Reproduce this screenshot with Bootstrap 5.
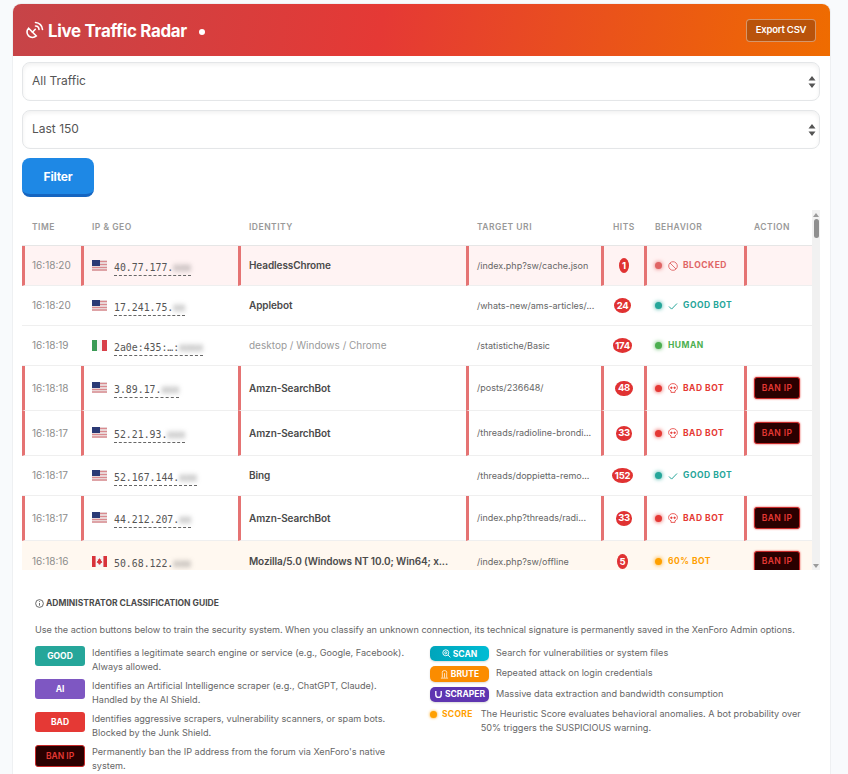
<!DOCTYPE html>
<html lang="en">
<head>
  <meta charset="UTF-8">
  <meta name="viewport" content="width=device-width, initial-scale=1.0">
  <title>Live Traffic Radar</title>
  <link href="https://cdn.jsdelivr.net/npm/bootstrap@5.3.0/dist/css/bootstrap.min.css" rel="stylesheet">
  <style>
    html, body { height: 774px; overflow: hidden; }
    body { background: #f8fafc; font-family: Inter, "Noto Sans", sans-serif; color: #555; padding: 4px 18px 0 13px; font-size: 10px; }
    .radar-card { background: #fff; border: 0; box-shadow: 0 0 0 1px #eef0f2; border-radius: 8px 8px 0 0; height: 800px; }
    .radar-head { height: 52px; padding: 0 14px 0 13px; border-radius: 8px 8px 0 0; background: linear-gradient(100deg, #c64448 0%, #e53935 45%, #ef6c00 100%); color: #fff; }
    .radar-title { font-size: 16.9px; font-weight: 700; letter-spacing: -.3px; margin: 0; padding-top: 2px; }
    .live-dot { width: 6px; height: 6px; border-radius: 50%; background: #fff; margin-left: 12px; margin-top: 3px; }
    .export-btn { background: #b9530b; border: 1px solid rgba(255,255,255,.4); color: #fff; font-size: 9.5px; font-weight: 600; padding: 0; width: 70px; height: 23px; border-radius: 4px; letter-spacing: -.2px; }
    .filter-zone { padding: 6px 10px 0 9px; }
    .filter-zone .form-select { height: 39px; border-radius: 8px; border-color: #e4e6e8; font-size: 12px; color: #555; padding: 0 20px 2px 9px; margin-bottom: 9px; box-shadow: inset 0 2px 4px rgba(0,0,0,.06); background-size: 8px 12px; background-position: right 3px center; background-image: url("data:image/svg+xml,%3csvg xmlns='http://www.w3.org/2000/svg' viewBox='0 0 8 12'%3e%3cpath fill='%23555' d='M4 0l3.5 4.5h-7zM4 12L.5 7.5h7z'/%3e%3c/svg%3e"); }
    .filter-btn { width: 72px; height: 39px; background: #1e88e5; border: 0; border-bottom: 3px solid #1565c0; border-radius: 8px; color: #fff; font-size: 12px; font-weight: 700; letter-spacing: -.2px; padding: 2px 0 0; }
    .radar-scroll { margin: 13px 10px 0 9px; height: 360px; display: flex; overflow: hidden; }
    .radar-clip { flex: 1; overflow: hidden; }
    .fake-bar { width: 8px; background: #f1f1f1; display: flex; flex-direction: column; align-items: center; }
    .fake-thumb { width: 5px; height: 19px; background: #8f8f8f; border-radius: 3px; margin-top: 2px; }
    .bar-up, .bar-down { width: 0; height: 0; border-left: 3px solid transparent; border-right: 3px solid transparent; }
    .bar-up { border-bottom: 4px solid #9a9a9a; margin-top: 3px; }
    .bar-down { border-top: 4px solid #9a9a9a; margin-top: auto; margin-bottom: 2px; }
    .radar-table { table-layout: fixed; width: 790px; margin: 0; border-collapse: separate; border-spacing: 0; }
    .radar-table th { height: 36px; font-size: 8.5px; font-weight: 600; color: #999; letter-spacing: .5px; text-transform: uppercase; padding: 0 0 0 11px; border-bottom: 1px solid #e6e6e6; vertical-align: middle; }
    .radar-table th:first-child, .radar-table th:last-child { padding-left: 10px; }
    .radar-table th:nth-child(5) { padding-left: 12px; }
    .radar-table td { height: 40px; padding: 0 0 0 11px; vertical-align: middle; font-size: 10px; color: #666; border-bottom: 1px solid #efefef; white-space: nowrap; overflow: hidden; background: transparent; }
    .radar-table td:first-child, .radar-table td:last-child { padding-left: 10px; }
    .row-blocked td { background: #fff3f3; }
    .row-warn td { background: #fff8f0; }
    .radar-table .row-warn td { height: 42px; }
    .radar-table .row-bad td, .radar-table .row-blocked td { border-left: 3px solid #e57373; padding-left: 8px; }
    .radar-table .row-bad td:first-child, .radar-table .row-bad td:last-child, .radar-table .row-blocked td:first-child, .radar-table .row-blocked td:last-child { padding-left: 7px; }
    .radar-table .row-bad td { height: 45px; }
    .radar-table td.uri-cell { font-size: 9px; }
    .radar-table td.hit-cell { padding-left: 0; }
    .hit-time { color: #8c8c8c !important; }
    .flag-box { width: 15px; height: 11px; margin: 0 7px 0 0; vertical-align: -4px; }
    .ip-addr { font-family: "DejaVu Sans Mono", monospace; font-size: 9.85px; color: #555; border-bottom: 1px dashed #666; display: inline-block; line-height: 14px; vertical-align: -4px; }
    .ip-hide { filter: blur(2.5px); }
    .who-bold { font-weight: 600; color: #4a4a4a !important; letter-spacing: -.1px; }
    .who-plain { color: #9a9a9a !important; }
    .hit-pill { display: inline-flex; align-items: center; justify-content: center; background: #e03232; color: #fff; font-weight: 700; font-size: 9.5px; letter-spacing: -.3px; min-width: 10px; padding: 1px 2.5px; height: 15px; border-radius: 50%; }
    .status-cell { display: flex; align-items: center; gap: 6px; font-size: 8.5px; font-weight: 700; letter-spacing: .5px; }
    .status-dot { width: 7px; height: 7px; border-radius: 50%; flex: none; }
    .status-cell svg { width: 10px; height: 10px; flex: none; margin-right: -1px; }
    .tone-blocked { color: #e06565; } .tone-blocked .status-dot { background: #e06565; box-shadow: 0 0 4px #e06565; }
    .tone-good { color: #26a69a; } .tone-good .status-dot { background: #26a69a; box-shadow: 0 0 4px #26a69a; }
    .tone-human { color: #4caf50; } .tone-human .status-dot { background: #4caf50; box-shadow: 0 0 4px #4caf50; }
    .tone-bad { color: #e53935; } .tone-bad .status-dot { background: #e53935; box-shadow: 0 0 4px #e53935; }
    .tone-warn { color: #ffa000; } .tone-warn .status-dot { background: #ffa000; box-shadow: 0 0 4px #ffa000; }
    .ban-btn { width: 46px; height: 22px; padding: 0; background: #2a0000; border: 1px solid #c62828; color: #e53935; font-size: 8.5px; font-weight: 600; letter-spacing: .4px; border-radius: 3px; box-shadow: 0 0 2px #e53935; }
    .guide-zone { padding: 26px 14px 0 22px; font-size: 9.12px; line-height: 14px; color: #666; }
    .guide-title { font-size: 8.5px; font-weight: 700; color: #4a4a4a; display: flex; align-items: center; gap: 2px; margin-bottom: 13px; }
    .guide-intro { margin-bottom: 9px; white-space: nowrap; }
    .guide-cols { display: grid; grid-template-columns: 378px 1fr; column-gap: 17px; }
    .guide-line { display: flex; gap: 7px; margin-bottom: 5px; }
    .guide-chip { flex: none; width: 50px; height: 20px; border-radius: 3px; color: #fff; font-size: 8.5px; font-weight: 700; display: flex; align-items: center; justify-content: center; }
    .guide-side { display: flex; gap: 7px; margin-bottom: 5px; align-items: flex-start; }
    .side-chip { flex: none; width: 59px; height: 15.4px; border-radius: 5px; color: #fff; font-size: 8.5px; font-weight: 700; display: flex; align-items: center; justify-content: center; gap: 2px; box-shadow: 0 1px 2px rgba(0,0,0,.15); }
    .side-chip svg { width: 9px; height: 9px; }
    .chip-good { background: #26a69a; } .chip-ai { background: #7e57c2; } .chip-bad { background: #e53935; }
    .chip-ban { background: #2a0000; border: 1px solid #c62828; color: #e53935; font-weight: 600; height: 22px; }
    .chip-scan { background: linear-gradient(90deg, #00a5bb, #00bcd4); } .chip-brute { background: #fb8c00; } .chip-scraper { background: #5e35b1; }
    .score-tag { flex: none; display: flex; align-items: center; gap: 5px; color: #ffa000; font-size: 8.5px; font-weight: 700; letter-spacing: .3px; height: 14px; margin-right: 1px; }
    .score-tag i { width: 7px; height: 7px; border-radius: 50%; background: #ffa000; box-shadow: 0 0 3px #ffa000; display: block; }
  </style>
</head>
<body>
  <div class="card radar-card">
    <div class="radar-head d-flex align-items-center justify-content-between">
      <div class="d-flex align-items-center">
        <svg width="18" height="18" viewBox="0 0 18 18" fill="none" stroke="#fff" stroke-width="1.6" stroke-linecap="round" class="me-1">
          <path d="M9.5 1.5a7.2 7.2 0 0 1 7 7"/>
          <path d="M9.5 5a3.6 3.6 0 0 1 3.5 3.5"/>
          <path d="M2.6 7.2l7.7 7.7a4.6 4.6 0 0 1-7.7-7.7z"/>
          <path d="M6.4 11.2l2.9-2.9"/>
        </svg>
        <h1 class="radar-title">Live Traffic Radar</h1>
        <span class="live-dot"></span>
      </div>
      <button class="btn export-btn" type="button">Export CSV</button>
    </div>

    <div class="filter-zone">
      <select class="form-select"><option>All Traffic</option><option>Bots</option><option>Humans</option></select>
      <select class="form-select"><option>Last 150</option><option>Last 300</option></select>
      <button class="btn filter-btn" type="button">Filter</button>
    </div>

    <div class="radar-scroll">
      <div class="radar-clip">
        <table class="table radar-table">
          <colgroup><col style="width:59px"><col style="width:157px"><col style="width:228px"><col style="width:135px"><col style="width:43px"><col style="width:100px"><col style="width:68px"></colgroup>
          <thead>
            <tr><th>Time</th><th>IP &amp; Geo</th><th>Identity</th><th>Target URI</th><th>Hits</th><th>Behavior</th><th>Action</th></tr>
          </thead>
          <tbody id="radarRows"></tbody>
        </table>
      </div>
      <div class="fake-bar"><span class="bar-up"></span><span class="fake-thumb"></span><span class="bar-down"></span></div>
    </div>

    <div class="guide-zone">
      <div class="guide-title">
        <svg width="9" height="9" viewBox="0 0 10 10" fill="none" stroke="#4a4a4a" stroke-width=".9"><circle cx="5" cy="5" r="4.3"/><path d="M5 4.4v3M5 2.4v.9"/></svg>
        ADMINISTRATOR CLASSIFICATION GUIDE
      </div>
      <div class="guide-intro">Use the action buttons below to train the security system. When you classify an unknown connection, its technical signature is permanently saved in the XenForo Admin options.</div>
      <div class="guide-cols">
        <div>
          <div class="guide-line"><span class="guide-chip chip-good">GOOD</span><span>Identifies a legitimate search engine or service (e.g., Google, Facebook).<br>Always allowed.</span></div>
          <div class="guide-line"><span class="guide-chip chip-ai">AI</span><span>Identifies an Artificial Intelligence scraper (e.g., ChatGPT, Claude).<br>Handled by the AI Shield.</span></div>
          <div class="guide-line"><span class="guide-chip chip-bad">BAD</span><span>Identifies aggressive scrapers, vulnerability scanners, or spam bots.<br>Blocked by the Junk Shield.</span></div>
          <div class="guide-line"><span class="guide-chip chip-ban">BAN IP</span><span>Permanently ban the IP address from the forum via XenForo's native<br>system.</span></div>
        </div>
        <div>
          <div class="guide-side"><span class="side-chip chip-scan"><svg viewBox="0 0 10 10" fill="none" stroke="#fff" stroke-width="1"><circle cx="4.2" cy="4.2" r="3.3"/><circle cx="4.2" cy="4.2" r="1.2"/><path d="M6.7 6.7L9.3 9.3"/></svg>SCAN</span><span>Search for vulnerabilities or system files</span></div>
          <div class="guide-side"><span class="side-chip chip-brute"><svg viewBox="0 0 10 10" fill="none" stroke="#fff" stroke-width=".8"><path d="M2.5 3.5V2.6a2.5 2 0 0 1 5 0v.9M1 9h8M2.6 3.5v5M5 3.5v5M7.4 3.5v5"/></svg>BRUTE</span><span>Repeated attack on login credentials</span></div>
          <div class="guide-side"><span class="side-chip chip-scraper"><svg viewBox="0 0 10 10" fill="none" stroke="#fff" stroke-width="1.5"><path d="M2 1v4.2a3 3 0 0 0 6 0V1"/></svg>SCRAPER</span><span>Massive data extraction and bandwidth consumption</span></div>
          <div class="guide-side"><span class="score-tag"><i></i>SCORE</span><span>The Heuristic Score evaluates behavioral anomalies. A bot probability over 50% triggers the SUSPICIOUS warning.</span></div>
        </div>
      </div>
    </div>
  </div>

  <script>
    const flags = {
      us: '<svg class="flag-box" viewBox="0 0 15 11"><rect width="15" height="11" fill="#eee"/><path d="M0 1.5h15M0 4.5h15M0 7.5h15M0 10h15" stroke="#d98a8f" stroke-width="1.4"/><rect width="8" height="6" fill="#2b3a75"/></svg>',
      it: '<svg class="flag-box" viewBox="0 0 15 11"><rect width="5" height="11" fill="#3a9a55"/><rect x="5" width="5" height="11" fill="#f4f4f4"/><rect x="10" width="5" height="11" fill="#d8404a"/></svg>',
      ca: '<svg class="flag-box" viewBox="0 0 15 11"><rect width="15" height="11" fill="#f6f6f6"/><rect width="3.6" height="11" fill="#d8333a"/><rect x="11.4" width="3.6" height="11" fill="#d8333a"/><path d="M7.5 2l.8 1.6.9-.4-.3 2 1.2-.5-.3 1.1.6.4-1.9 1.3.1.8H7.7V9h-.4v-.7H6.4l.1-.8-1.9-1.3.6-.4-.3-1.1 1.2.5-.3-2 .9.4z" fill="#d8333a"/></svg>'
    };
    const marks = {
      block: '<svg viewBox="0 0 10 10" fill="none" stroke="currentColor" stroke-width=".9"><circle cx="5" cy="5" r="4.3"/><path d="M2 2l6 6"/></svg>',
      check: '<svg viewBox="0 0 10 10" fill="none" stroke="currentColor" stroke-width="1"><path d="M1 5.5l2.6 2.6L9 2.5"/></svg>',
      skull: '<svg viewBox="0 0 10 10" fill="none" stroke="currentColor" stroke-width=".8"><path d="M3 9.4V7.8C1.4 7.1.6 5.9.6 4.5.6 2.2 2.6.6 5 .6s4.4 1.6 4.4 3.9c0 1.4-.8 2.6-2.4 3.3v1.6z"/><circle cx="3.4" cy="4.8" r=".8" fill="currentColor"/><circle cx="6.6" cy="4.8" r=".8" fill="currentColor"/></svg>'
    };
    const kinds = {
      blocked: ['tone-blocked', marks.block, 'BLOCKED'],
      good: ['tone-good', marks.check, 'GOOD BOT'],
      human: ['tone-human', '', 'HUMAN'],
      bad: ['tone-bad', marks.skull, 'BAD BOT'],
      warn: ['tone-warn', '', '60% BOT']
    };
    // time, flag, ip, masked part, identity, uri, hits, behavior, row class, ban button
    const rows = [
      ['16:18:20', 'us', '40.77.177.', 'xxx', 'HeadlessChrome', '/index.php?sw/cache.json', 1, 'blocked', 'row-blocked', false],
      ['16:18:20', 'us', '17.241.75.', 'xx', 'Applebot', '/whats-new/ams-articles/...', 24, 'good', '', false],
      ['16:18:19', 'it', '2a0e:435:…:', 'xxxx', 'desktop / Windows / Chrome', '/statistiche/Basic', 174, 'human', '', false],
      ['16:18:18', 'us', '3.89.17.', 'xxx', 'Amzn-SearchBot', '/posts/236648/', 48, 'bad', 'row-bad', true],
      ['16:18:17', 'us', '52.21.93.', 'xxx', 'Amzn-SearchBot', '/threads/radioline-brondi...', 33, 'bad', 'row-bad', true],
      ['16:18:17', 'us', '52.167.144.', 'xxx', 'Bing', '/threads/doppietta-remo...', 152, 'good', '', false],
      ['16:18:17', 'us', '44.212.207.', 'xx', 'Amzn-SearchBot', '/index.php?threads/radi...', 33, 'bad', 'row-bad', true],
      ['16:18:16', 'ca', '50.68.122.', 'xxx', 'Mozilla/5.0 (Windows NT 10.0; Win64; x...', '/index.php?sw/offline', 5, 'warn', 'row-warn', true]
    ];
    document.getElementById('radarRows').innerHTML = rows.map(function (r) {
      const kind = kinds[r[7]];
      const who = r[4].startsWith('desktop') ? 'who-plain' : 'who-bold';
      return '<tr class="' + r[8] + '">' +
        '<td class="hit-time">' + r[0] + '</td>' +
        '<td>' + flags[r[1]] + '<span class="ip-addr">' + r[2] + '<span class="ip-hide">' + r[3] + '</span></span></td>' +
        '<td class="' + who + '">' + r[4] + '</td>' +
        '<td class="uri-cell">' + r[5] + '</td>' +
        '<td class="hit-cell text-center"><span class="hit-pill">' + r[6] + '</span></td>' +
        '<td><div class="status-cell ' + kind[0] + '"><span class="status-dot"></span>' + kind[1] + '<span>' + kind[2] + '</span></div></td>' +
        '<td>' + (r[9] ? '<button class="btn ban-btn" type="button">BAN IP</button>' : '') + '</td>' +
        '</tr>';
    }).join('');
  </script>
  <script src="https://cdn.jsdelivr.net/npm/bootstrap@5.3.0/dist/js/bootstrap.bundle.min.js"></script>
</body>
</html>
